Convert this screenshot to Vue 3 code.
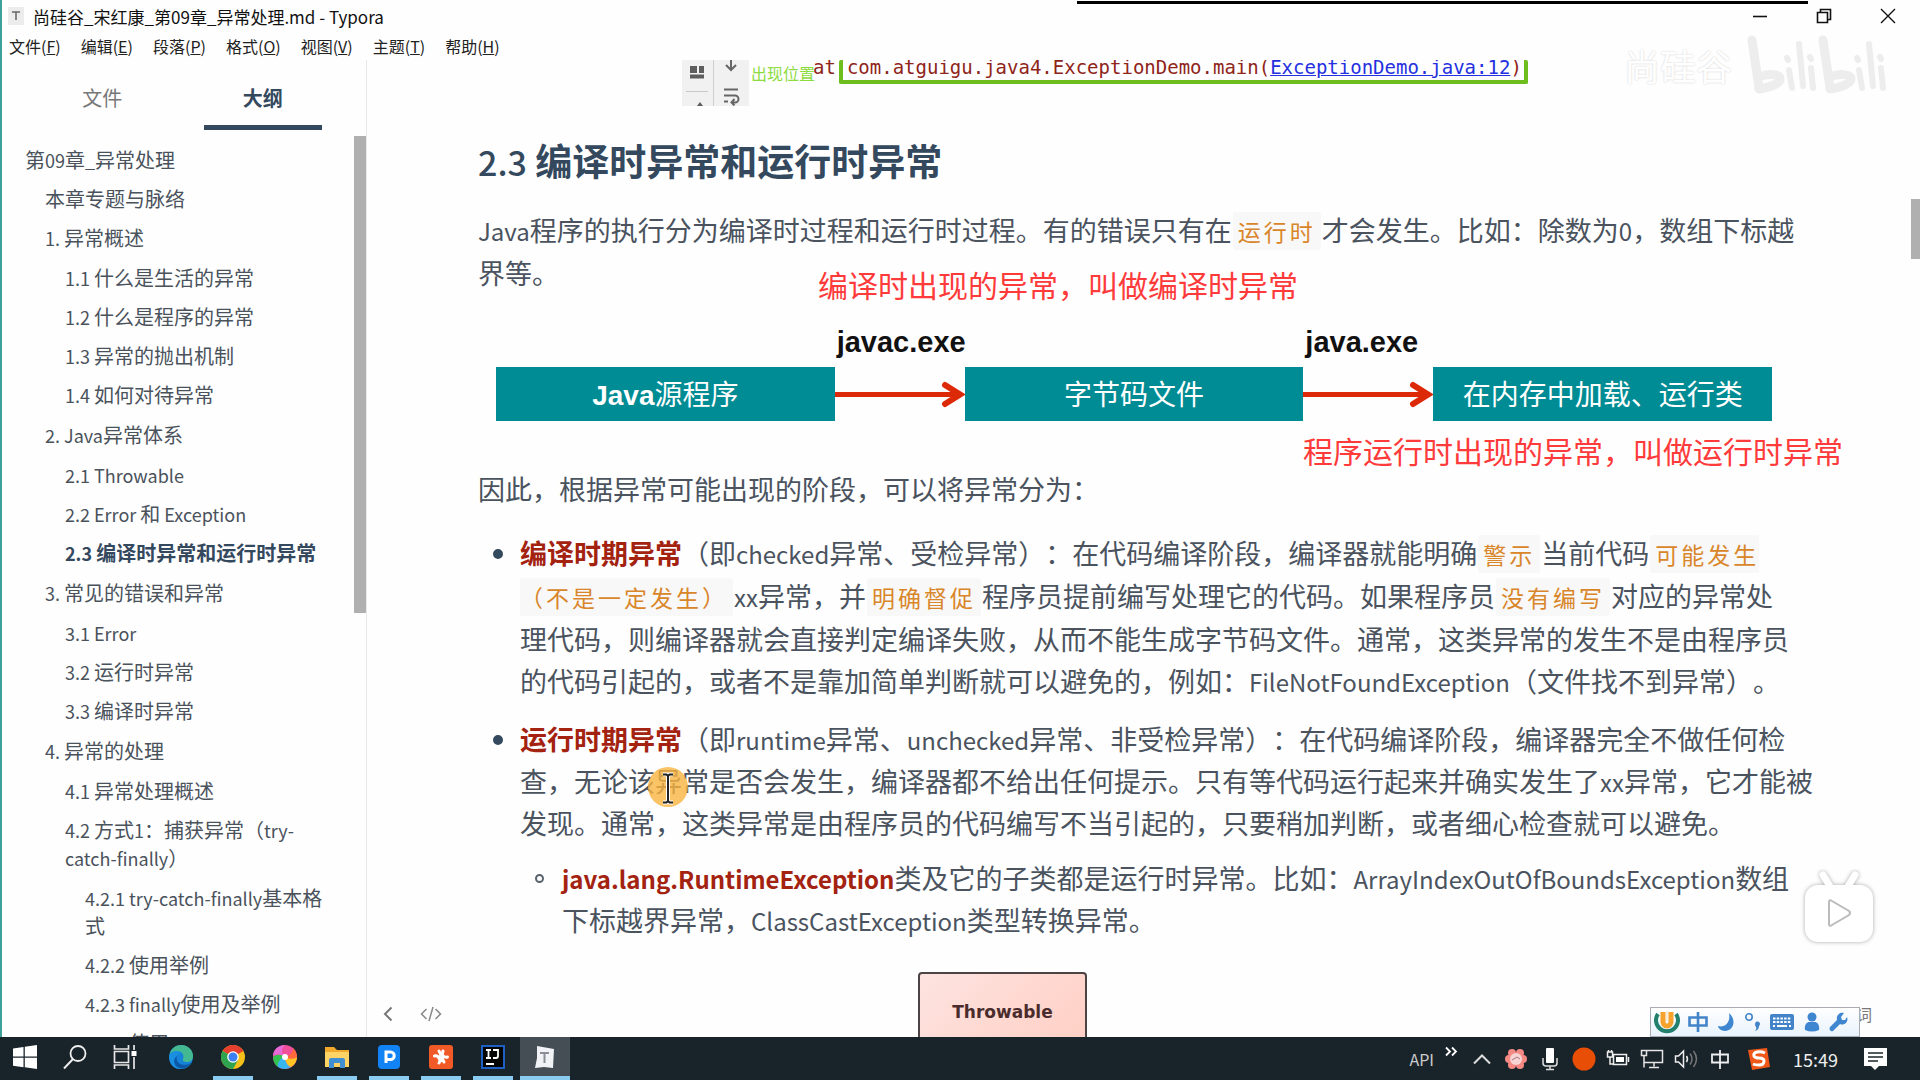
<script setup>
import { ref } from 'vue'

const menus = [
  { label: '文件', key: 'F' },
  { label: '编辑', key: 'E' },
  { label: '段落', key: 'P' },
  { label: '格式', key: 'O' },
  { label: '视图', key: 'V' },
  { label: '主题', key: 'T' },
  { label: '帮助', key: 'H' }
]

const activeTab = ref('大纲')
const current = ref('2.3 编译时异常和运行时异常')

const chapters = [
  { title: '本章专题与脉络', items: [] },
  {
    title: '1. 异常概述',
    items: [
      { title: '1.1 什么是生活的异常' },
      { title: '1.2 什么是程序的异常' },
      { title: '1.3 异常的抛出机制' },
      { title: '1.4 如何对待异常' }
    ]
  },
  {
    title: '2. Java异常体系',
    items: [
      { title: '2.1 Throwable' },
      { title: '2.2 Error 和 Exception' },
      { title: '2.3 编译时异常和运行时异常' }
    ]
  },
  {
    title: '3. 常见的错误和异常',
    items: [
      { title: '3.1 Error' },
      { title: '3.2 运行时异常' },
      { title: '3.3 编译时异常' }
    ]
  },
  {
    title: '4. 异常的处理',
    items: [
      { title: '4.1 异常处理概述' },
      {
        title: '4.2 方式1：捕获异常（try-catch-finally）',
        items: [
          '4.2.1 try-catch-finally基本格式',
          '4.2.2 使用举例',
          '4.2.3 finally使用及举例',
          '4.2.4 使用'
        ]
      }
    ]
  }
]

// latin runs are set a little smaller than the chinese text
const runs = (text) =>
  text.split(/([\x20-\x7e]+)/).filter(Boolean).map((t) => ({ t, en: /^[\x20-\x7e]/.test(t) }))
</script>

<template>
  <div class="window">
    <header class="titlebar">
      <svg class="appIcon" width="16" height="18" viewBox="0 0 16 18">
        <rect width="16" height="18" fill="#ececec" />
        <path d="M4 5h8M8 5v8" stroke="#666" stroke-width="1.5" fill="none" />
      </svg>
      <span class="title">尚硅谷_宋红康_第09章_异常处理.md - Typora</span>
      <div class="controls">
        <button aria-label="最小化">
          <svg width="16" height="16" viewBox="0 0 16 16"><path d="M1 8.500h14" stroke="#111" stroke-width="1.6" /></svg>
        </button>
        <button aria-label="还原">
          <svg width="16" height="16" viewBox="0 0 16 16"><path d="M1.500 4.500h10v10h-10zM4.500 4.500v-3h10v10h-3" fill="none" stroke="#111" stroke-width="1.6" /></svg>
        </button>
        <button aria-label="关闭">
          <svg width="16" height="16" viewBox="0 0 16 16"><path d="M1 1l14 14M15 1L1 15" stroke="#111" stroke-width="1.4" /></svg>
        </button>
      </div>
    </header>
    <nav class="menubar">
      <button v-for="m in menus" :key="m.key">{{ m.label }}(<u>{{ m.key }}</u>)</button>
    </nav>

    <div class="body">
      <aside class="sidebar">
        <div class="tabs">
          <button v-for="t in ['文件', '大纲']" :key="t" :class="{ active: activeTab === t }" @click="activeTab = t">{{ t }}</button>
        </div>
        <div class="outline">
          <ul>
            <li>
              <a href="#"><span v-for="(r, i) in runs('第09章_异常处理')" :key="i" :class="{ en: r.en }">{{ r.t }}</span></a>
            </li>
          </ul>
          <ul class="level">
            <li v-for="c in chapters" :key="c.title">
              <a href="#"><span v-for="(r, i) in runs(c.title)" :key="i" :class="{ en: r.en }">{{ r.t }}</span></a>
              <ul v-if="c.items.length" class="level sub">
                <li v-for="s in c.items" :key="s.title">
                  <a href="#" :class="{ current: s.title === current }" @click.prevent="current = s.title"><span v-for="(r, i) in runs(s.title)" :key="i" :class="{ en: r.en }">{{ r.t }}</span></a>
                  <ul v-if="s.items" class="level sub">
                    <li v-for="x in s.items" :key="x">
                      <a href="#"><span v-for="(r, i) in runs(x)" :key="i" :class="{ en: r.en }">{{ r.t }}</span></a>
                    </li>
                  </ul>
                </li>
              </ul>
            </li>
          </ul>
          <div class="sideThumb"></div>
        </div>
      </aside>

      <main class="editor">
        <article>
          <div class="console">
            <svg class="consoleTools" width="67" height="46" viewBox="0 0 67 46">
              <rect width="67" height="46" fill="#f1f1f1" />
              <path d="M31.500 0v46" stroke="#cfcfcf" />
              <path d="M4 31.500h22" stroke="#c8c8c8" />
              <path d="M8 6h7v7h-7zM17 6h5v7h-5zM8 14.500h14v4h-14z" fill="#5d5d5d" />
              <path d="M15 46l3-4 3 4z" fill="#5d5d5d" />
              <path d="M49 0v9M44 5l5 5 5-5" fill="none" stroke="#666" stroke-width="2" />
              <path d="M42 29.500h14M42 35.500h11a3.500 3.500 0 0 1 0 7h-3M42 41.500h4M52.500 39l-3 3.500 3 3" fill="none" stroke="#666" stroke-width="2" />
            </svg>
            <span class="place">出现位置</span>
            <code class="at">at</code>
            <code class="trace">com.atguigu.java4.ExceptionDemo.main(<a href="#">ExceptionDemo.java:12</a>)</code>
          </div>

          <h3><span>2.3</span> 编译时异常和运行时异常</h3>

          <p>
            <span class="en">Java</span>程序的执行分为编译时过程和运行时过程。有的错误只有在<code>运行时</code>才会发生。比如：除数为<span class="en">0</span>，数组下标越<br>界等。
          </p>

          <div class="flow">
            <div class="stage"><b>Java</b>源程序</div>
            <div class="step">
              <span>javac.exe</span>
              <svg width="130" height="54" viewBox="0 0 130 54">
                <path d="M0 27.500h122" stroke="#dc2a08" stroke-width="5" fill="none" />
                <path d="M110 18l15 9.500-15 9.500" stroke="#dc2a08" stroke-width="6" stroke-linecap="round" fill="none" />
              </svg>
            </div>
            <div class="stage">字节码文件</div>
            <div class="step">
              <span>java.exe</span>
              <svg width="130" height="54" viewBox="0 0 130 54">
                <path d="M0 27.500h122" stroke="#dc2a08" stroke-width="5" fill="none" />
                <path d="M110 18l15 9.500-15 9.500" stroke="#dc2a08" stroke-width="6" stroke-linecap="round" fill="none" />
              </svg>
            </div>
            <div class="stage">在内存中加载、运行类</div>
          </div>

          <p class="lead">因此，根据异常可能出现的阶段，可以将异常分为：</p>

          <ul class="kinds">
            <li>
              <strong>编译时期异常</strong>（即<span class="en">checked</span>异常、受检异常）：在代码编译阶段，编译器就能明确<code>警示</code>当前代码<code>可能发生<br>（不是一定发生）</code><span class="en">xx</span>异常，并<code>明确督促</code>程序员提前编写处理它的代码。如果程序员<code>没有编写</code>对应的异常处<br>理代码，则编译器就会直接判定编译失败，从而不能生成字节码文件。通常，这类异常的发生不是由程序员<br>的代码引起的，或者不是靠加简单判断就可以避免的，例如：<span class="en">FileNotFoundException</span>（文件找不到异常）。
            </li>
            <li>
              <strong>运行时期异常</strong>（即<span class="en">runtime</span>异常、<span class="en">unchecked</span>异常、非受检异常）：在代码编译阶段，编译器完全不做任何检<br>查，无论该异常是否会发生，编译器都不给出任何提示。只有等代码运行起来并确实发生了<span class="en">xx</span>异常，它才能被<br>发现。通常，这类异常是由程序员的代码编写不当引起的，只要稍加判断，或者细心检查就可以避免。
              <ul>
                <li>
                  <strong class="en">java.lang.RuntimeException</strong>类及它的子类都是运行时异常。比如：<span class="en">ArrayIndexOutOfBoundsException</span>数组<br>下标越界异常，<span class="en">ClassCastException</span>类型转换异常。
                </li>
              </ul>
            </li>
          </ul>

          <div class="classBox">Throwable</div>
        </article>

        <div class="note noteCompile">编译时出现的异常，叫做编译时异常</div>
        <div class="note noteRun">程序运行时出现的异常，叫做运行时异常</div>

        <svg class="cursor" width="40" height="40" viewBox="0 0 40 40">
          <circle cx="20" cy="20" r="20" fill="#f9b440" fill-opacity="0.8" />
          <path d="M15 7.500h3.500l1.500 1.500 1.500-1.500h3.500M20 9v25M15 35.500h3.500l1.500-1.500 1.500 1.500h3.500" fill="none" stroke="#fff" stroke-width="4" />
          <path d="M15 7.500h3.500l1.500 1.500 1.500-1.500h3.500M20 9v25M15 35.500h3.500l1.500-1.500 1.500 1.500h3.500" fill="none" stroke="#222" stroke-width="2" />
        </svg>

        <div class="footer">
          <button aria-label="侧边栏">
            <svg width="10" height="16" viewBox="0 0 10 16"><path d="M8.500 1.500L2 8l6.500 6.500" fill="none" stroke="#777" stroke-width="2" /></svg>
          </button>
          <button aria-label="源代码模式">
            <svg width="22" height="16" viewBox="0 0 22 16"><path d="M6.500 3L1.500 8l5 5M15.500 3l5 5-5 5M13 1L9 15" fill="none" stroke="#888" stroke-width="1.5" /></svg>
          </button>
          <span class="words">词</span>
        </div>
        <div class="pageThumb"></div>
      </main>
    </div>

    <div class="topLine"></div>

    <div class="watermark">
      <span>尚硅谷</span>
      <svg width="140" height="62" viewBox="0 0 140 62">
        <g fill="none" stroke="#ededed" stroke-linecap="round" stroke-linejoin="round">
          <path stroke-width="9" d="M5 6l7 48M76 6l7 48" />
          <path stroke-width="9" d="M12 43c9-4 21-3 21 2s-12 9-21 10M83 43c9-4 21-3 21 2s-12 9-21 10" />
          <path stroke-width="6" d="M42 36l3 18M52 10l4 42M64 34l2 20M112 36l3 18M122 10l4 42M134 34l2 20" />
          <path stroke-width="6" d="M40 24l1 2M63 23l1 2M110 24l1 2M133 23l1 2" />
        </g>
      </svg>
    </div>

    <svg class="player" width="82" height="80" viewBox="0 0 82 80">
      <g class="playerShape" fill="#fff">
        <path d="M25 6l8 13M57 6l-8 13" stroke="#fff" stroke-width="7" stroke-linecap="round" />
        <rect x="7" y="16" width="68" height="57" rx="13" />
      </g>
      <path d="M31 33v22q0 3 3 1l17-10q2-2 0-4l-17-10q-3-2-3 1z" fill="#fff" stroke="#bbb" stroke-width="2" />
    </svg>

    <div class="ime">
      <svg width="26" height="26" viewBox="0 0 26 26">
        <path d="M4 5a11 11 0 1 0 18 0" fill="none" stroke="#23806d" stroke-width="4" />
        <path d="M9 3v10a4 4 0 0 0 8 0V3" fill="none" stroke="#f6a22c" stroke-width="5" />
        <path d="M13 2v10" stroke="#fce9c8" stroke-width="1.500" />
      </svg>
      <svg width="22" height="22" viewBox="0 0 22 22"><path d="M2.500 6.500h17v8h-17zM11 1v20" fill="none" stroke="#4384c8" stroke-width="2.600" /></svg>
      <svg width="20" height="20" viewBox="0 0 20 20"><path d="M12 1c7 6 6 17-4 18-4 0-7-3-7-5 7 2 13-4 11-13z" fill="#3f86d0" /></svg>
      <svg width="18" height="20" viewBox="0 0 18 20">
        <circle cx="5" cy="5" r="3.200" fill="none" stroke="#4384c8" stroke-width="1.600" />
        <path d="M11 12a2.500 2.500 0 1 1 4 2q0 4-4 5 2-2 1-4-1-1-1-3z" fill="#4384c8" />
      </svg>
      <svg width="26" height="18" viewBox="0 0 26 18">
        <rect x="1" y="1" width="24" height="16" rx="2" fill="#4384c8" />
        <path d="M4 5.500h18M4 9h18" stroke="#fff" stroke-width="2" stroke-dasharray="2.500 1.200" />
        <path d="M4 13h2M8 13h10M20 13h2" stroke="#fff" stroke-width="2" />
      </svg>
      <svg width="18" height="20" viewBox="0 0 18 20"><circle cx="9" cy="5" r="4.500" fill="#3f86d0" /><path d="M2 18c-1-5 2-8 4-8h6c2 0 5 3 4 8q-7 3-14 0z" fill="#3f86d0" /></svg>
      <svg width="20" height="20" viewBox="0 0 20 20"><path d="M2 15l7-7c-1-5 3-8 7-7l-3 4 1 3 3 0 2-3c2 5-3 9-7 7l-7 7q-2 1-3-1-1-1 0-3z" fill="#3f86d0" /></svg>
    </div>

    <footer class="taskbar">
      <div class="apps">
        <button class="system" aria-label="开始">
          <svg width="24" height="24" viewBox="0 0 24 24"><path d="M0 3.500l10.500-1.500v9.500H0zM11.800 1.800L24 0v11.500H11.800zM0 12.700h10.500v9.500L0 20.700zM11.800 12.700H24V24l-12.200-1.800z" fill="#fff" /></svg>
        </button>
        <button class="system" aria-label="搜索">
          <svg width="24" height="24" viewBox="0 0 24 24"><circle cx="15" cy="8.500" r="7.500" fill="none" stroke="#eee" stroke-width="1.800" /><path d="M10 14L1 23.500" stroke="#eee" stroke-width="2" /></svg>
        </button>
        <button class="system" aria-label="任务视图">
          <svg width="24" height="24" viewBox="0 0 24 24"><path d="M1.500 0v4h14v-4M1.500 24v-4h14v4M1.500 6.500h14v11h-14zM21 0v5M21 12v12" fill="none" stroke="#e6e6e6" stroke-width="1.700" /><rect x="18.500" y="6" width="5" height="5" fill="#fff" /></svg>
        </button>
        <button aria-label="Edge">
          <svg width="24" height="24" viewBox="0 0 24 24">
            <circle cx="12" cy="12" r="12" fill="#1583d8" />
            <path d="M0.500 10C2 3 7 0 12 0c8 0 12 6 12 11 0 4-3 6-6 6-3 0-5-1-4-3 2-5-2-8-6-8-3 0-6 1-7.500 4z" fill="#44b890" />
            <path d="M0.500 10c3-5 9-5 12-2-4 0-6 3-6 7 0 5 4 8 8 8.500C6 26-1 19 .500 10z" fill="#1a8fe0" />
            <path d="M8 11c-2 6 4 12 14 7-4 6-11 7-15 3-3-4-2-8 1-10z" fill="#0c57a6" />
          </svg>
        </button>
        <button class="running" aria-label="Chrome">
          <svg width="24" height="24" viewBox="0 0 24 24">
            <circle cx="12" cy="12" r="12" fill="#f6c01b" />
            <path d="M12 12L1.600 6A12 12 0 0 1 22.400 6z" fill="#e5402f" />
            <path d="M12 12L1.600 6A12 12 0 0 0 12 24l5-9z" fill="#2ea350" />
            <circle cx="12" cy="12" r="5.800" fill="#fff" /><circle cx="12" cy="12" r="4.500" fill="#3c7ff0" />
          </svg>
        </button>
        <button aria-label="照片">
          <svg width="24" height="24" viewBox="0 0 24 24">
            <circle cx="12" cy="12" r="12" fill="#f04f9c" />
            <path d="M12 12C8 9 8 3 12 0 5 0 0 5 0 11c3-2 8-2 12 1z" fill="#e66ad8" />
            <path d="M12 12C8 9 3 9 0 12c0 4 2 8 5 10 0-4 2-8 7-10z" fill="#31c24f" />
            <path d="M12 12c-5 1-8 6-7 10 5 3 10 2 13 0-4-2-6-6-6-10z" fill="#38b6f0" />
            <path d="M12 12c0 5 3 9 6 10 4-2 6-7 6-10-4 2-8 2-12 0z" fill="#ffc421" />
            <path d="M12 12c4 2 9 2 12 0 0-4-2-7-4-9 0 4-3 8-8 9z" fill="#ff6a3a" />
            <circle cx="12" cy="12" r="3" fill="#fff" />
          </svg>
        </button>
        <button class="running" aria-label="文件资源管理器">
          <svg width="24" height="24" viewBox="0 0 24 24"><path d="M0 2h9l3 3h12v17H0z" fill="#f0a92b" /><path d="M0 7h24v15H0z" fill="#fcd364" /><path d="M4 23v-8q0-2 2-2h12q2 0 2 2v8h-5v-5H9v5z" fill="#3f8fd2" /></svg>
        </button>
        <button class="running" aria-label="播放器">
          <svg width="24" height="24" viewBox="0 0 24 24"><rect x="1" width="22" height="24" rx="4" fill="#1283f5" /><path d="M9 18V7h4.500a3.500 3.500 0 0 1 0 7.500H9" fill="none" stroke="#fff" stroke-width="3" /></svg>
        </button>
        <button class="running" aria-label="XMind">
          <svg width="24" height="24" viewBox="0 0 24 24"><rect width="24" height="24" rx="3" fill="#f15a26" /><path d="M10 6q4 6 0 12M5.500 11q3-1 5 3M14 6q-2 7 1 11M18.500 12q-3 1-5-2" fill="none" stroke="#fff" stroke-width="3" stroke-linecap="round" /></svg>
        </button>
        <button class="running" aria-label="IntelliJ IDEA">
          <svg width="24" height="24" viewBox="0 0 24 24"><rect x="1" y="1" width="22" height="22" fill="#050505" stroke="#1d5fc4" stroke-width="2" /><path d="M5 5h5M7.500 5v8M5 13h5M12 5h5v6q0 2-2 2h-3M5 19h8" fill="none" stroke="#fff" stroke-width="1.800" /></svg>
        </button>
        <button class="running front" aria-label="Typora">
          <svg width="24" height="24" viewBox="0 0 24 24"><path d="M4 1l17 3-1 19-9-1-9 1 2-10z" fill="#f0f2f6" /><path d="M7 8h9M11.500 8v10" stroke="#8a8f97" stroke-width="2" /></svg>
        </button>
      </div>

      <div class="tray">
        <span class="api">API</span>
        <svg class="more" width="14" height="12" viewBox="0 0 14 12"><path d="M1 1.500l4 4-4 4M7 1.500l4 4-4 4" fill="none" stroke="#fff" stroke-width="1.800" /></svg>
        <div class="icons">
          <svg width="20" height="12" viewBox="0 0 20 12"><path d="M2 10.500L10 2.500l8 8" fill="none" stroke="#ddd" stroke-width="2" /></svg>
          <svg width="22" height="22" viewBox="0 0 22 22">
            <g fill="#f58a84"><circle cx="7" cy="5" r="4" /><circle cx="15" cy="5" r="4" /><circle cx="18" cy="11" r="4" /><circle cx="15" cy="17" r="4" /><circle cx="7" cy="17" r="4" /><circle cx="4" cy="11" r="4" /></g>
            <circle cx="11" cy="11" r="6" fill="#f5d4d2" /><path d="M7 12l5-3 3 2" stroke="#a78" fill="none" />
          </svg>
          <svg width="18" height="24" viewBox="0 0 18 24"><rect x="5" y="1" width="8" height="15" rx="1" fill="#fff" /><path d="M2 11v5q0 3 3 3h8q3 0 3-3v-5M9 19v3M5 22.500h8" fill="none" stroke="#ddd" stroke-width="1.500" /></svg>
          <svg width="24" height="24" viewBox="0 0 24 24"><circle cx="12" cy="12" r="11.500" fill="#e94e06" /></svg>
          <svg width="24" height="18" viewBox="0 0 24 18"><path d="M7.500 4.500h13v10h-13zM22.500 7v5M1.500 2v5h5v-5zM2.500 0v2M5.500 0v2M4 7v7h3" fill="none" stroke="#eee" stroke-width="1.500" /><path d="M10 7h8v5h-8z" fill="#fff" /></svg>
          <svg width="24" height="20" viewBox="0 0 24 20"><path d="M7 1.500h15.500v12H7M4 13.500h7M14 13.500v4M9 18.500h10M1.500 1.500h5v5h-5zM4 6.500v12" fill="none" stroke="#e6e6e6" stroke-width="1.500" /></svg>
          <svg width="24" height="20" viewBox="0 0 24 20"><path d="M1.500 7v6h3l5 5V2l-5 5zM12.500 7q2 3 0 6" fill="none" stroke="#eee" stroke-width="1.500" /><path d="M16 4.500q4 5.500 0 11M19.500 2q6 8 0 16" fill="none" stroke="#777" stroke-width="1.500" /></svg>
          <svg width="20" height="20" viewBox="0 0 20 20"><path d="M2 5.500h16v8H2zM10 1v19" fill="none" stroke="#eee" stroke-width="1.800" /></svg>
        </div>
        <svg class="sogou" width="24" height="24" viewBox="0 0 24 24"><path d="M1 3l19-2 3 19-18 3z" fill="#f0581a" /><path d="M18 6q-4-2-8-1-4 1-3 4 1 2 5 2 5 0 5 3 0 4-5 4-4 0-6-1" fill="none" stroke="#fff" stroke-width="3" /></svg>
        <time>15:49</time>
        <svg class="notice" width="24" height="24" viewBox="0 0 24 24"><path d="M0 1h23v18h-8l-4 4-4-4H0z" fill="#fff" /><path d="M4 6h15M4 10h15M4 14h10" stroke="#1b2429" stroke-width="1.500" /></svg>
      </div>
    </footer>
  </div>
</template>

<style>
html,
body,
#app {
  height: 100%;
}
body {
  margin: 0;
  overflow: hidden;
}
</style>

<style scoped>
.window {
  position: relative;
  box-sizing: border-box;
  height: 100%;
  display: flex;
  flex-direction: column;
  overflow: hidden;
  background: #fefefe;
  color: #4a535e;
  font-family: "Noto Sans CJK SC", sans-serif;
  text-spacing-trim: space-all;
}
button {
  border: 0;
  padding: 0;
  background: none;
  color: inherit;
  font: inherit;
}
svg {
  display: block;
  flex: none;
}
ul {
  margin: 0;
  padding: 0;
  list-style: none;
}
.titlebar {
  display: flex;
  align-items: center;
  height: 32px;
  padding-left: 6px;
  border-left: 2px solid #3f9f99;
  color: #111;
  font-size: 17px;
}
.title {
  margin-left: 9px;
}
.controls {
  display: flex;
  margin-left: auto;
}
.controls button {
  display: flex;
  align-items: center;
  justify-content: center;
  width: 64px;
  height: 28px;
}
.menubar {
  display: flex;
  gap: 20px;
  height: 28px;
  padding-left: 7px;
  border-left: 2px solid #3f9f99;
  color: #222;
  font-size: 16px;
  line-height: 28px;
}
.body {
  flex: 1;
  display: flex;
  min-height: 0;
}
.sidebar {
  box-sizing: border-box;
  flex: none;
  width: 367px;
  display: flex;
  flex-direction: column;
  border-left: 2px solid #3f9f99;
  border-right: 1px solid #e8e8e8;
}
.tabs {
  display: flex;
  gap: 42px;
  height: 70px;
  padding: 0 44px 0 41px;
}
.tabs button {
  flex: 1;
  box-sizing: border-box;
  padding-top: 10px;
  border-bottom: 5px solid transparent;
  color: #777;
  font-size: 20px;
}
.tabs .active {
  border-color: #34495e;
  color: #34495e;
  font-weight: 700;
}
.outline {
  position: relative;
  flex: 1;
  min-height: 0;
  overflow: hidden;
  padding: 11px 38px 0 23px;
  font-size: 20px;
  line-height: 28px;
}
.outline a {
  display: block;
  padding: 5px 0 6px;
  color: #4a525c;
  text-decoration: none;
}
.outline .en {
  font-size: 18px;
}
.outline .current {
  color: #34495e;
  font-weight: 700;
}
.level {
  padding-left: 20px;
}
.sub {
  padding-top: 1px;
  padding-bottom: 1px;
}
.sideThumb {
  position: absolute;
  top: 6px;
  right: 0;
  width: 12px;
  height: 477px;
  background: #b0b0b0;
}
.editor {
  position: relative;
  flex: 1;
  min-width: 0;
  overflow: hidden;
}
article {
  padding: 0 112px 0 111px;
  font-size: 27px;
  line-height: 42px;
  white-space: nowrap;
}
.en {
  font-size: 24px;
  line-height: 1;
}
.console {
  display: flex;
  height: 46px;
  margin-left: 204px;
}
.place {
  margin-left: 2px;
  color: #8ddc3f;
  font-size: 16px;
  line-height: 26px;
}
.console code {
  margin: 0;
  padding: 0;
  background: none;
  color: #8f2419;
  font-family: "DejaVu Sans Mono", monospace;
  font-size: 19px;
  line-height: 14px;
  letter-spacing: normal;
}
.console .at {
  margin-left: -2px;
}
.console .trace {
  box-sizing: border-box;
  height: 24px;
  margin-left: 3px;
  padding: 0 2px 0 4px;
  border: 4px solid #6dbd1c;
  border-top: 0;
}
.trace a {
  color: #2430e0;
}
h3 {
  margin: 28px 0 0;
  color: #34495e;
  font-size: 37px;
  font-weight: 700;
  line-height: 52px;
}
h3 span {
  font-size: 34px;
  font-weight: 500;
}
p {
  margin: 21px 0 0;
}
code {
  margin: 0 1px;
  padding: 2px 5px;
  border-radius: 2px;
  background: #f8f8f8;
  color: #d9862a;
  font-family: "Noto Sans CJK SC", monospace;
  font-size: 23px;
  letter-spacing: 3px;
}
.flow {
  display: flex;
  align-items: flex-end;
  margin: 23px 36px 0 18px;
}
.stage {
  flex: 1;
  padding-top: 4px;
  background: #008c94;
  color: #fff;
  font-family: "Liberation Sans", "Noto Sans CJK SC", sans-serif;
  font-size: 28px;
  line-height: 50px;
  text-align: center;
}
.step {
  width: 130px;
  color: #111;
  font-family: "Liberation Sans", sans-serif;
  font-size: 29px;
  font-weight: 700;
  line-height: 50px;
}
.step span {
  padding-left: 2px;
}
.lead {
  margin-top: 47px;
}
.kinds {
  margin-top: 22px;
  padding-left: 42px;
}
.kinds > li + li {
  margin-top: 16px;
}
.kinds ul {
  margin-top: 13px;
  padding-left: 42px;
}
.kinds li::before {
  content: "";
  float: left;
  box-sizing: border-box;
  width: 9px;
  height: 9px;
  margin: 17px 0 0 -27px;
  border: 5px solid #34495e;
  border-radius: 50%;
}
.kinds ul li::before {
  border: 2px solid #59636e;
}
strong {
  color: #a32210;
}
.classBox {
  box-sizing: border-box;
  width: 169px;
  height: 80px;
  margin: 31px 0 0 440px;
  border: 2px solid #4c4444;
  border-radius: 4px;
  background: linear-gradient(135deg, #fde3e0, #ffcfc4);
  color: #4a2c2c;
  font-family: "DejaVu Sans", sans-serif;
  font-size: 17px;
  font-weight: 700;
  line-height: 76px;
  text-align: center;
}
.note {
  position: absolute;
  color: #ff3a3a;
  font-size: 30px;
  line-height: 40px;
  white-space: nowrap;
}
.noteCompile {
  left: 451px;
  top: 204px;
}
.noteRun {
  left: 936px;
  top: 370px;
}
.cursor {
  position: absolute;
  left: 281px;
  top: 707px;
}
.footer {
  position: absolute;
  left: 16px;
  right: 48px;
  bottom: 14px;
  display: flex;
  align-items: center;
  gap: 27px;
  height: 18px;
  color: #777;
  font-size: 16px;
  line-height: 18px;
}
.words {
  margin-left: auto;
}
.pageThumb {
  position: absolute;
  top: 139px;
  right: 0;
  width: 9px;
  height: 60px;
  background: #b0b0b0;
}
.topLine {
  position: absolute;
  top: 1px;
  left: 1077px;
  right: 112px;
  height: 3px;
  background: #000;
}
.watermark {
  position: absolute;
  top: 34px;
  right: 33px;
  display: flex;
  align-items: center;
  gap: 15px;
  color: #fff;
  font-size: 36px;
  line-height: 62px;
  text-shadow: 0 0 2px #ccc;
}
.player {
  position: absolute;
  right: 40px;
  bottom: 131px;
}
.playerShape {
  filter: drop-shadow(0 0 2px #aaa);
}
.ime {
  position: absolute;
  right: 60px;
  bottom: 43px;
  box-sizing: border-box;
  display: flex;
  align-items: center;
  justify-content: space-between;
  width: 210px;
  height: 30px;
  padding: 0 11px 0 3px;
  border: 1px solid #a9adb3;
  background: linear-gradient(#fff, #e9f3fc);
}
.taskbar {
  flex: none;
  display: flex;
  justify-content: space-between;
  height: 43px;
  background: #19232a;
  color: #eee;
}
.apps {
  display: flex;
}
.apps button {
  box-sizing: border-box;
  display: flex;
  align-items: center;
  justify-content: center;
  width: 40px;
  height: 43px;
  margin: 0 6px;
  border-bottom: 4px solid transparent;
}
.apps .system {
  width: 50px;
  margin: 0;
}
.apps .system + button:not(.system) {
  margin-left: 11px;
}
.apps .running {
  border-color: #8accf0;
}
.apps .front {
  width: 50px;
  margin: 0 1px;
  background: #454e54;
  background-clip: padding-box;
}
.tray {
  display: flex;
  align-items: center;
  padding-right: 32px;
}
.api {
  font-size: 16px;
  color: #ccc;
}
.more {
  margin: -14px 6px 0 11px;
}
.icons {
  display: grid;
  grid-template-columns: repeat(8, 34px);
  align-items: center;
  justify-items: center;
}
.sogou {
  margin: 0 22px 0 10px;
}
time {
  font-size: 18px;
}
.notice {
  margin-left: 26px;
}
</style>
